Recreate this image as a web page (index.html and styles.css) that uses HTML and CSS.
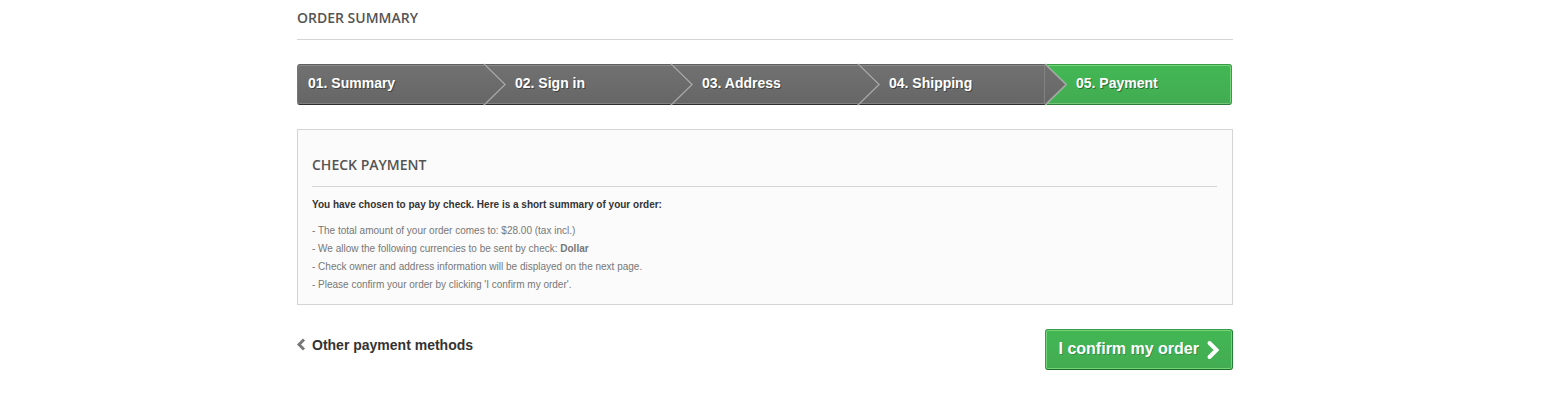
FILE: index.html
```html
<!DOCTYPE html>
<html lang="en">
<head>
<meta charset="utf-8">
<title>Order summary</title>
<link rel="stylesheet" href="styles.css">
</head>
<body>
<main class="page">
  <h1 class="heading">Order summary</h1>
  <ol class="steps">
    <li class="step">01. Summary
      <svg class="arrow" viewBox="0 0 24 41" aria-hidden="true"><path class="arrow-shade" d="M-1 0L20 20.500L-1 41"/><path class="arrow-line" d="M0 0L21 20.500L0 41"/></svg></li>
    <li class="step">02. Sign in
      <svg class="arrow" viewBox="0 0 24 41" aria-hidden="true"><path class="arrow-shade" d="M-1 0L20 20.500L-1 41"/><path class="arrow-line" d="M0 0L21 20.500L0 41"/></svg></li>
    <li class="step">03. Address
      <svg class="arrow" viewBox="0 0 24 41" aria-hidden="true"><path class="arrow-shade" d="M-1 0L20 20.500L-1 41"/><path class="arrow-line" d="M0 0L21 20.500L0 41"/></svg></li>
    <li class="step step-last-done">04. Shipping
      <svg class="arrow" viewBox="0 0 24 41" aria-hidden="true"><defs><linearGradient id="grey" x2="0" y2="1"><stop stop-color="#727171"/><stop offset="1" stop-color="#666"/></linearGradient></defs><path fill="url(#grey)" d="M0 0L21 20.500L0 41Z"/><path class="arrow-glow" d="M1 0L22 20.500L1 41"/><path class="arrow-line" d="M0 0L21 20.500L0 41"/></svg></li>
    <li class="step step-current" aria-current="step">05. Payment</li>
  </ol>
  <form class="form" onsubmit="return false">
    <section class="box">
      <h2 class="heading">Check payment</h2>
      <p class="lead">You have chosen to pay by check. Here is a short summary of your order:</p>
      <p class="notes">- The total amount of your order comes to: $28.00 (tax incl.)<br>
        - We allow the following currencies to be sent by check: <b>Dollar</b><br>
        - Check owner and address information will be displayed on the next page.<br>
        - Please confirm your order by clicking 'I confirm my order'.</p>
    </section>
    <div class="actions">
      <a class="back" href="#"><svg class="back-icon" viewBox="0 0 9 14" aria-hidden="true"><path d="M7 1.500L2 6.500L7 11.500"/></svg>Other payment methods</a>
      <button class="confirm" type="submit">I confirm my order<svg class="confirm-icon" viewBox="0 0 13 18" aria-hidden="true"><path d="M2.500 3L9.500 10L2.500 17"/></svg></button>
    </div>
  </form>
</main>
</body>
</html>
```
FILE: styles.css
```css
* { box-sizing: border-box; }

body {
  margin: 0;
  padding: 0 18px 0 0;
  background: #fff;
  color: #777;
  font: 10px/18px "Liberation Sans", Arial, sans-serif;
}

.page {
  max-width: 936px;
  margin: 0 auto;
  padding: 8px 0 32px;
}

.heading {
  margin: 0;
  padding-bottom: 11px;
  border-bottom: 1px solid #d6d4d4;
  color: #555454;
  font: 600 14px/20px "Open Sans", sans-serif;
  text-transform: uppercase;
}

.steps {
  display: grid;
  grid-template-columns: repeat(5, 1fr);
  margin: 24px 1px 24px 0;
  padding: 0;
  list-style: none;
}

.step {
  position: relative;
  height: 41px;
  padding: 0 11px 0 31px;
  border-top: 1px solid #5f5f5f;
  border-bottom: 1px solid #2e2e2e;
  background: linear-gradient(#727171, #666);
  box-shadow: inset 0 1px #8b8a8a, inset 0 -1px #828282;
  color: #fff;
  font: bold 14px/37px "Liberation Sans", Arial, sans-serif;
  text-shadow: 1px 1px rgba(0, 0, 0, 0.4);
  white-space: nowrap;
}

.step:first-child {
  padding-left: 10px;
  border-left: 1px solid #777;
  border-radius: 3px 0 0 3px;
}

.step-last-done { box-shadow: inset 0 1px #8b8a8a, inset 0 -1px #828282, inset -1px 0 #828282; }

.step-current {
  border: 1px solid #399a49;
  border-bottom-color: #2e7a3a;
  border-left: 0;
  border-radius: 0 3px 3px 0;
  background: linear-gradient(#43b754, #42ac52);
  box-shadow: inset -1px 1px #74d578, inset 0 -1px #74c578;
}

.arrow {
  position: absolute;
  z-index: 1;
  top: -1px;
  left: 100%;
  width: 24px;
  height: 41px;
  overflow: visible;
  fill: none;
}

.arrow-shade { stroke: #606060; }
.arrow-line { stroke: #a6a6a6; stroke-width: 1.4; }
.arrow-glow { stroke: #74c77d; }

.box {
  padding: 25px 15px 10px 14px;
  border: 1px solid #d6d4d4;
  background: #fbfbfb;
}

.box .heading { margin-bottom: 9px; }

.lead {
  margin: 0 0 8px;
  color: #333;
  font-weight: bold;
}

.notes { margin: 0; }

.actions {
  display: flex;
  align-items: flex-start;
  justify-content: space-between;
  margin-top: 24px;
}

.back {
  display: flex;
  align-items: center;
  gap: 6px;
  padding-top: 6px;
  color: #333;
  font: bold 14px/20px "Liberation Sans", Arial, sans-serif;
  text-decoration: none;
}

.back-icon {
  width: 9px;
  height: 14px;
  fill: none;
  stroke: #777;
  stroke-width: 3;
}

.confirm {
  display: flex;
  align-items: center;
  gap: 8px;
  height: 41px;
  padding: 0 12px 2px 13px;
  border: 1px solid #399a49;
  border-color: #399a49 #247f32 #1a6d27 #399a49;
  border-radius: 3px;
  background: linear-gradient(#43b754, #42ac52);
  box-shadow: inset 0 0 0 1px #74d578;
  color: #fff;
  font: bold 16px/20px "Liberation Sans", Arial, sans-serif;
  text-shadow: 1px 1px rgba(0, 0, 0, 0.2);
}

.confirm-icon {
  width: 13px;
  height: 18px;
  overflow: visible;
  fill: none;
  stroke: #fff;
  stroke-width: 4;
  stroke-linecap: round;
}
```
